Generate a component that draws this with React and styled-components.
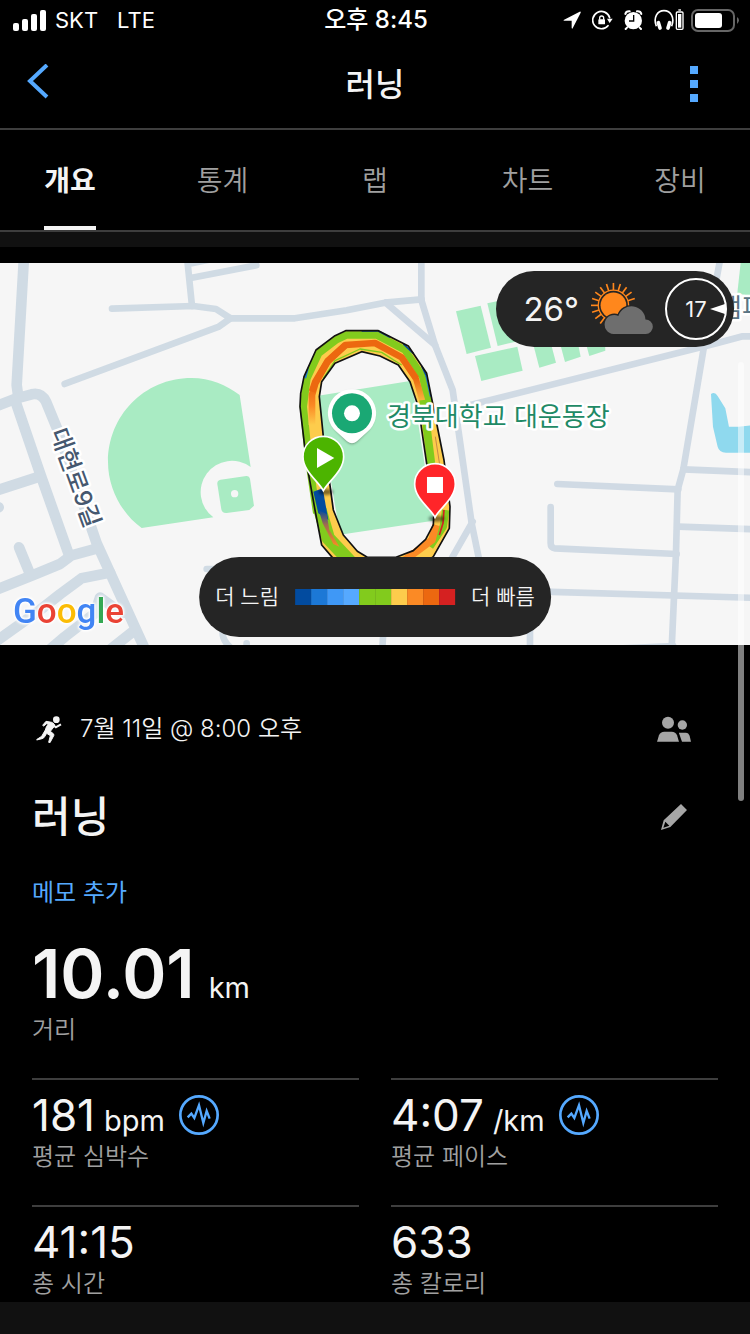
import { useState } from "react"
import styled, { createGlobalStyle } from "styled-components"

const GlobalStyle = createGlobalStyle`
  :root {
    --white: #f4f4f4;
    --grey: #a0a0a0;
    --line: #3e3e3e;
    --strip: #111;
    --blue: #55a9ff;
    --pill: #252525;
  }

  * {
    box-sizing: border-box;
  }

  body {
    margin: 0;
    background-color: #000;
    color: var(--white);
    font-family: Inter, "Noto Sans CJK KR", sans-serif;
  }

  h1, h2, p, dl, dt, dd {
    margin: 0;
  }

  button {
    padding: 0;
    border: none;
    background: none;
    color: inherit;
    font: inherit;
    cursor: pointer;
  }

  svg {
    display: block;
  }
`

const Screen = styled.div`
  position: relative;
  display: flex;
  flex-direction: column;
  min-height: 100vh;
`

const StatusBar = styled.div`
  display: grid;
  grid-template-columns: 1fr auto 1fr;
  align-items: center;
  height: 40px;
  padding: 0 11px 0 13px;
  color: #fff;
  font-size: 22px;
  line-height: 40px;
`

const StatusGroup = styled.div`
  display: flex;
  align-items: center;
  justify-content: ${({ $end }) => ($end ? "flex-end" : "flex-start")};
  gap: ${({ $gap }) => $gap}px;
`

const StatusTime = styled.time`
  font-size: 24px;
  font-weight: 500;
`

const Header = styled.header`
  display: grid;
  grid-template-columns: 1fr auto 1fr;
  align-items: center;
  height: 90px;
  padding: 0 27px;
  border-bottom: 2px solid var(--line);

  h1 {
    padding-top: 2px;
    font-size: 32px;
    line-height: 40px;
    font-weight: 500;
  }

  button {
    color: var(--blue);
    justify-self: start;
  }

  button:last-child {
    justify-self: end;
    padding: 0 25px;
  }
`

const TabList = styled.nav`
  display: grid;
  grid-template-columns: repeat(5, 100px);
  justify-content: space-between;
  height: 102px;
  padding: 0 20px;
  border-bottom: 2px solid var(--line);
`

const Tab = styled.button`
  display: flex;
  justify-content: center;

  span {
    padding-top: 6px;
    border-bottom: 4px solid
      ${({ $active }) => ($active ? "var(--white)" : "transparent")};
    color: ${({ $active }) => ($active ? "var(--white)" : "var(--grey)")};
    font-size: 28px;
    line-height: 90px;
    font-weight: ${({ $active }) => ($active ? 700 : 350)};
  }
`

const Strip = styled.div`
  flex: ${({ $grow }) => ($grow ? 1 : "none")};
  min-height: 15px;
  background-color: var(--strip);
`

const MapSection = styled.section`
  position: relative;
  height: 382px;
  margin-top: 16px;
  overflow: hidden;
  background-color: #f6f6f6;
`

const Pill = styled.div`
  position: absolute;
  display: flex;
  align-items: center;
  border-radius: 40px;
  background-color: var(--pill);
`

const WeatherPill = styled(Pill)`
  top: 8px;
  right: 16px;
  height: 76px;
  padding: 0 7px 0 27px;
  gap: 12px;
  font-size: 33px;
`

const LegendPill = styled(Pill)`
  bottom: 8px;
  left: 50%;
  height: 80px;
  padding: 0 16px;
  gap: 16px;
  transform: translateX(-50%);
  font-size: 21px;
  line-height: 32px;
  font-weight: 350;
  white-space: nowrap;
`

const LegendScale = styled.div`
  display: flex;
`

const LegendStep = styled.i`
  width: 16px;
  height: 16px;
  background-color: ${({ $color }) => $color};
`

const WindDial = styled.div`
  position: relative;
  display: grid;
  place-items: center;
  width: 62px;
  height: 62px;
  border: 2px solid #fff;
  border-radius: 50%;
  font-size: 22px;

  svg {
    position: absolute;
    right: 0;
  }
`

const GoogleLogo = styled.div`
  position: absolute;
  left: 13px;
  bottom: 11px;
  font-family: Roboto, sans-serif;
  font-size: 35px;
  line-height: 44px;
  font-weight: 500;
  filter: drop-shadow(0 0 1px #fff) drop-shadow(0 0 1px #fff)
    drop-shadow(0 0 1px #fff);
`

const Letter = styled.span`
  color: ${({ $color }) => $color};
`

const Details = styled.main`
  padding: 64px 32px 2px;
`

const DetailRow = styled.div`
  display: flex;
  align-items: center;
  justify-content: space-between;
  height: ${({ $height }) => $height}px;
  margin-bottom: ${({ $after }) => $after}px;

  h2 {
    font-size: 42px;
    font-weight: 500;
    line-height: 56px;
  }
`

const DateText = styled.p`
  display: flex;
  align-items: center;
  gap: 18px;
  padding-left: 4px;
  font-size: 24px;
  line-height: 40px;
  font-weight: 350;
`

const IconButton = styled.button`
  display: grid;
  place-items: center;
  width: 88px;
  height: 40px;
  color: #a6a6a6;
`

const MemoButton = styled.button`
  color: var(--blue);
  font-size: 24px;
  line-height: 36px;
`

const Metric = styled.div`
  display: flex;
  flex-direction: column-reverse;

  dt {
    color: var(--grey);
    font-size: 24px;
    line-height: 32px;
    font-weight: 350;
  }

  dd {
    display: flex;
    align-items: baseline;
    height: 40px;
    margin-bottom: 6px;
    font-size: 44px;
    line-height: 40px;
  }
`

const Unit = styled.span`
  margin-left: 9px;
  font-size: 29px;
`

const MainMetric = styled(Metric)`
  margin: 27px 0 32px;

  dd {
    height: 72px;
    margin-bottom: 4px;
    font-size: 67px;
    line-height: 72px;
    font-weight: 600;
  }

  ${Unit} {
    margin-left: 14px;
    font-weight: 400;
  }
`

const MetricGrid = styled.dl`
  display: grid;
  grid-template-columns: 1fr 1fr;
  gap: 32px;
`

const GridMetric = styled(Metric)`
  padding-top: 15px;
  border-top: 2px solid var(--line);
`

const ChartButton = styled.button`
  align-self: center;
  margin-left: 14px;
  color: var(--blue);
`

const ScrollThumb = styled.div`
  position: absolute;
  top: 362px;
  right: 6px;
  width: 6px;
  height: 439px;
  border-radius: 3px;
  background-color: rgba(255, 255, 255, 0.5);
`

const tabs = ["개요", "통계", "랩", "차트", "장비"]

const paceColors = [
  "#024b9f",
  "#1c78d6",
  "#3f98f6",
  "#56a9ff",
  "#82cb1d",
  "#82cb1d",
  "#fdcc4c",
  "#fb8a25",
  "#ec6810",
  "#d52121"
]

const logoLetters = [
  ["G", "#4285f4"],
  ["o", "#ea4335"],
  ["o", "#fbbc05"],
  ["g", "#4285f4"],
  ["l", "#34a853"],
  ["e", "#ea4335"]
]

const metrics = [
  { label: "평균 심박수", value: "181", unit: "bpm", chart: true },
  { label: "평균 페이스", value: "4:07", unit: "/km", chart: true },
  { label: "총 시간", value: "41:15" },
  { label: "총 칼로리", value: "633" }
]

function SignalIcon() {
  return (
    <svg width="33" height="21" fill="#fff">
      <rect y="13" width="6" height="8" rx="2" />
      <rect x="9" y="9" width="6" height="12" rx="2" />
      <rect x="18" y="4" width="6" height="17" rx="2" />
      <rect x="27" width="6" height="21" rx="2" />
    </svg>
  )
}

function LocationIcon() {
  return (
    <svg width="18" height="18" viewBox="0 0 54 54">
      <path
        d="M2 27 50 2 Q54 1 53 5 L29 52 Q27 55 26 50 V29 H4 Q0 29 2 27Z"
        fill="#fff"
      />
    </svg>
  )
}

function RotationLockIcon() {
  return (
    <svg width="21" height="20" viewBox="0 0 63 60" fill="none" stroke="#fff">
      <path
        d="M53 23 A26 26 0 1 0 48 47"
        strokeWidth="5"
        strokeLinecap="round"
      />
      <path d="M45 26 H62 L53 39Z" fill="#fff" stroke="none" />
      <path d="M23 29 V24 a6 6 0 0 1 12 0 V29" strokeWidth="4" />
      <rect x="19" y="28" width="20" height="15" rx="2" fill="#fff" stroke="none" />
    </svg>
  )
}

function AlarmIcon() {
  return (
    <svg width="19" height="20" viewBox="0 0 57 60">
      <circle cx="28" cy="32" r="26" fill="#fff" />
      <path
        d="M4 12 Q6 3 17 4 M52 12 Q50 3 39 4 M9 53 5 57 M47 53 51 57"
        fill="none"
        stroke="#fff"
        strokeWidth="6"
        strokeLinecap="round"
      />
      <path d="M29 15 V33 H15" fill="none" stroke="#000" strokeWidth="4" />
    </svg>
  )
}

function HeadphonesIcon() {
  return (
    <svg width="30" height="22" viewBox="0 0 90 66" fill="none" stroke="#fff">
      <path d="M7 52 C-3 25 10 5 30 5 S63 25 53 52" strokeWidth="5" />
      <path
        d="M13 41 18 57 M47 41 42 57"
        strokeWidth="11"
        strokeLinecap="round"
      />
      <rect x="67" y="9" width="20" height="52" rx="3" strokeWidth="4" />
      <path d="M73 3 H81" strokeWidth="4" />
      <rect x="72" y="15" width="10" height="41" fill="#fff" stroke="none" />
    </svg>
  )
}

function BatteryIcon() {
  return (
    <svg width="48" height="23" viewBox="0 0 48 23">
      <rect
        x="1"
        y="1"
        width="42"
        height="21"
        rx="6"
        fill="none"
        stroke="#666"
        strokeWidth="2"
      />
      <rect x="4" y="4" width="27" height="15" rx="3" fill="#fff" />
      <path d="M46 8 Q50 11 46 15Z" fill="#666" />
    </svg>
  )
}

function BackIcon() {
  return (
    <svg width="22" height="40" viewBox="0 0 22 40">
      <path
        d="M20 1 3 17 20 33"
        fill="none"
        stroke="currentColor"
        strokeWidth="4"
      />
    </svg>
  )
}

function MoreIcon() {
  return (
    <svg width="8" height="36" fill="currentColor">
      <rect width="8" height="8" />
      <rect y="14" width="8" height="8" />
      <rect y="28" width="8" height="8" />
    </svg>
  )
}

function RunnerIcon() {
  return (
    <svg width="26" height="27" viewBox="107 75 78 81">
      <circle cx="168" cy="86" r="10" fill="#f4f4f4" />
      <path
        d="M137 91 L154 94 Q164 98 162 106 L150 121 L160 129 Q162 133 158 138 L149 155 L145 154 L150 134 L139 127 L133 137 Q131 141 125 143 L109 147 L110 145 L124 136 L135 117 Q137 107 144 99 L139 98 L130 105 L127 103Z"
        fill="#f4f4f4"
        stroke="#f4f4f4"
        strokeWidth="3"
        strokeLinejoin="round"
      />
      <path
        d="M159 101 L166 109 L182 100"
        fill="none"
        stroke="#f4f4f4"
        strokeWidth="6"
        strokeLinejoin="round"
      />
    </svg>
  )
}

function PeopleIcon() {
  return (
    <svg width="34" height="26" viewBox="0 0 102 78" fill="currentColor">
      <circle cx="33" cy="20" r="18" />
      <circle cx="76" cy="27" r="14" />
      <path d="M0 77 L6 58 Q10 47 22 47 H44 Q56 47 60 58 L66 77Z" />
      <path d="M66 50 H86 Q95 50 98 60 L102 77 H75 L66 52Z" />
    </svg>
  )
}

function PencilIcon() {
  return (
    <svg width="26" height="26" viewBox="0 0 78 78">
      <path
        d="M60 0 78 18 28 69 0 78 8 49Z M13 53 7 71 25 65Z"
        fill="currentColor"
        fillRule="evenodd"
      />
    </svg>
  )
}

function ChartIcon() {
  return (
    <svg width="40" height="40" viewBox="0 0 120 120" fill="none" stroke="currentColor">
      <circle cx="60" cy="60" r="56" strokeWidth="8" />
      <path
        d="M26 67 37 56 46 69 60 31 73 84 83 48 92 71"
        strokeWidth="7"
      />
    </svg>
  )
}

function WeatherIcon() {
  // rays fan around the part of the sun that the cloud leaves free
  const rays = Array.from({ length: 13 }, (_, i) => (i - 8) * 18)

  return (
    <svg width="62" height="54" viewBox="302 62 188 162">
      {rays.map((angle) => (
        <path
          key={angle}
          d="M370 64 V86"
          stroke="#ff871c"
          strokeWidth="5"
          transform={`rotate(${angle} 370 132)`}
        />
      ))}
      <circle cx="370" cy="132" r="46" fill="none" stroke="#ff871c" strokeWidth="4" />
      <circle cx="370" cy="132" r="39" fill="#ff871c" />
      <path
        d="M370 219 A29 29 0 1 1 385 164 A42 42 0 0 1 467 175 A22 22 0 1 1 468 219Z"
        fill="#6e6e6e"
        stroke="#252525"
        strokeWidth="8"
        paintOrder="stroke"
      />
    </svg>
  )
}

function RouteMap() {
  return (
    <svg
      width="100%"
      height="382"
      viewBox="0 263 750 382"
      preserveAspectRatio="xMidYMid slice"
      role="img"
      aria-label="경북대학교 대운동장"
    >
      <defs>
        <filter id="soft" x="-50%" y="-50%" width="200%" height="200%">
          <feGaussianBlur stdDeviation="5" />
        </filter>
        <linearGradient id="leftLane" x1="0" y1="230" x2="0" y2="345" gradientUnits="userSpaceOnUse">
          <stop stopColor="#ec6810" />
          <stop offset=".5" stopColor="#fb8a25" />
          <stop offset="1" stopColor="#fdcc4c" />
        </linearGradient>
        <linearGradient id="slowLane" x1="0" y1="600" x2="0" y2="710" gradientUnits="userSpaceOnUse">
          <stop stopColor="#024b9f" />
          <stop offset=".4" stopColor="#a06a50" />
          <stop offset="1" stopColor="#fb8a25" />
        </linearGradient>
        <linearGradient id="rightLane" x1="0" y1="205" x2="0" y2="290" gradientUnits="userSpaceOnUse">
          <stop stopColor="#ec6810" />
          <stop offset="1" stopColor="#fdcc4c" />
        </linearGradient>
      </defs>

      {/* west side */}
      <g transform="translate(0 260) scale(.3333)">
        <g
          fill="none"
          stroke="#d0dbe4"
          strokeWidth="32"
          strokeLinecap="round"
          strokeLinejoin="round"
        >
          <path d="M72 -10 50 375 55 412" />
          <path d="M-20 442 50 415 95 403 Q124 397 138 425 L175 515 290 850 445 1190" />
          <path d="M45 420 120 640 207 885" />
          <path d="M-20 695 118 650" />
          <path d="M-10 740 -4 742" />
          <path d="M-20 993 100 945 180 912 215 886 292 865" />
          <path d="M57 862 90 942" />
          <path d="M-20 1150 120 1050 180 1003 245 955 330 938" />
          <path d="M130 1185 195 1130 285 1060 300 1013 365 1060" />
          <path d="M310 1185 405 1110" />
        </g>
        <g
          fill="none"
          stroke="#d0dbe4"
          strokeWidth="20"
          strokeLinecap="round"
          strokeLinejoin="round"
        >
          <path d="M336 146 580 138 648 147 692 175 655 201 194 372" />
          <path d="M692 175 H885 L1040 151 1155 128 1265 118" />
          <path d="M561 -10 576 138 M572 54 769 16 M565 12 660 -8" />
          <path d="M620 927 H680 M668 1120 Q668 1145 700 1170 M740 1150 V1180 M1150 1120 1146 1180" />
        </g>
        <path
          d="M719 405 752 621 A92 92 0 0 0 640 772 L425 804 C370 765 324 690 324 605 C324 470 430 354 575 354 C630 354 680 375 719 405Z"
          fill="#a9ebc3"
        />
        <path
          d="M662 659 739 648 Q748 647 750 656 L762 737 748 750 680 759 Q666 760 664 748 L652 672 Q651 661 662 659Z"
          fill="#a9ebc3"
        />
        <circle cx="704" cy="701" r="11" fill="#f6f6f6" />
      </g>

      {/* east side */}
      <g transform="translate(450 260) scale(.3333)">
        <g
          fill="none"
          stroke="#d0dae4"
          strokeWidth="20"
          strokeLinecap="round"
          strokeLinejoin="round"
        >
          <path d="M-86 -10 -86 120 -45 255 8 390 65 790 100 960" />
          <path d="M-193 128 -45 255" />
          <path d="M68 785 5 895" />
          <path d="M10 448 800 250 878 229 H920" />
          <path d="M812 -10 762 260 700 628 683 690 678 880 664 1190" />
          <path d="M322 672 685 688" />
          <path d="M302 741 V850 Q302 864 315 865 L680 882" />
          <path d="M700 628 920 637 M685 800 920 808 M280 995 920 1014" />
          <path d="M240 1100 V1180 M500 1166 670 1158" />
        </g>
        <g fill="#a9ebc3">
          <path d="M18 154 92 137 123 263 50 282Z" />
          <path d="M112 130 190 113 220 240 143 258Z" />
          <path d="M75 288 202 260 218 332 94 363Z" />
          <path d="M252 262 300 240 318 308 268 323Z" />
          <path d="M330 250 382 240 392 290 345 306Z" />
          <path d="M405 240 465 240 466 272 418 288Z" />
          <path d="M873 0 H920 V112 L862 100Z" />
        </g>
        <path
          d="M783 402 Q795 394 803 408 L826 445 837 500 H866 L920 494 V578 H828 Q807 576 803 560 L789 500Z"
          fill="#8fd9ee"
        />
      </g>

      {/* stadium and the recorded laps */}
      <g transform="translate(280 310) scale(.3333)">
        <path d="M110 258 395 212 460 632 180 674Z" fill="#a9ebc3" />
        <path
          d="M197 62 H295 L385 108 440 190 462 300 492 450 510 590 508 655 460 740 380 800 H220 L155 740 125 705 105 600 80 460 60 290 62 250 72 200 108 120 165 77Z
             M245 125 L165 160 125 215 118 260 130 380 160 600 190 675 232 724 262 742 H348 L400 722 437 688 460 645 462 600 440 460 415 290 390 215 355 165 300 138Z"
          fill="#fdcc4c"
          fillRule="evenodd"
        />
        <g fill="none" strokeLinejoin="round">
          <path
            d="M110 610 87 455 70 290 81 205 116 130 170 89 200 75 H290 L375 120 428 200 450 300"
            stroke="#82cb1d"
            strokeWidth="22"
          />
          <path
            d="M96 345 V255 L106 220 143 155 196 106"
            stroke="url(#leftLane)"
            strokeWidth="20"
          />
          <path
            d="M96 245 106 215 143 153 196 105 285 99 365 142 408 205"
            stroke="#ec6810"
            strokeWidth="20"
          />
          <path d="M406 200 432 290" stroke="url(#rightLane)" strokeWidth="18" />
          <path
            d="M130 205 165 152 240 117 305 127 365 165"
            stroke="#82cb1d"
            strokeWidth="4"
          />
          <path d="M430 270 455 470" stroke="#82cb1d" strokeWidth="24" />
          <path d="M466 380 480 470" stroke="#c98a45" strokeWidth="3" />
          <path d="M497 600 490 650 450 710" stroke="#82cb1d" strokeWidth="22" />
          <path d="M468 645 456 690 375 750" stroke="#fb8a25" strokeWidth="22" />
          <path d="M492 600 489 640 478 675" stroke="#d52121" strokeWidth="5" />
          <path d="M120 600 145 685 215 760" stroke="#82cb1d" strokeWidth="40" />
          <path d="M245 63 H295 L330 82 M370 102 400 130 M425 168 440 200" stroke="#024b9f" strokeWidth="5" />
          <path d="M438 195 452 260 M76 205 84 175" stroke="#1c78d6" strokeWidth="5" />
        </g>
        <path d="M100 545 128 535 145 630 115 610Z" fill="#024b9f" />
        <path d="M116 600 140 612 148 660 178 710 160 702 128 640Z" fill="url(#slowLane)" />
        <g fill="none" stroke="#111" strokeWidth="5" strokeLinejoin="round">
          <path d="M220 800 155 740 125 705 105 600 80 460 60 290 62 250 72 200 108 120 165 77 197 62 H295 L385 108 440 190 462 300 492 450 510 590 508 655 460 740 380 800" />
          <path d="M245 125 165 160 125 215 118 260 130 380 160 600 190 675 232 724 262 742 H348 L400 722 437 688 460 645 462 600 440 460 415 290 390 215 355 165 300 138Z" />
        </g>
      </g>

      <g
        fontFamily="Inter, 'Noto Sans CJK KR', sans-serif"
        stroke="#fff"
        strokeWidth="5"
        strokeLinejoin="round"
        paintOrder="stroke"
      >
        <text x="387" y="426" fontSize="26" fill="#1f8a66">
          경북대학교 대운동장
        </text>
        <text x="718" y="317" fontSize="26" fill="#5a7584">
          캠퍼
        </text>
        <text
          fontSize="24"
          fontWeight="500"
          fill="#46586f"
          transform="translate(50 432) rotate(70)"
        >
          대현로9길
        </text>
      </g>

      <g transform="translate(280 310) scale(.3333)">
        <path
          d="M216 244 A70 70 0 0 1 262 362 L231 394 Q216 408 201 394 L170 362 A70 70 0 0 1 216 244Z"
          fill="#000"
          opacity=".5"
          filter="url(#soft)"
        />
        <path
          d="M216 238 A72 72 0 0 1 264 364 L231 394 Q216 406 201 394 L168 364 A72 72 0 0 1 216 238Z"
          fill="#fff"
        />
        <circle cx="216" cy="310" r="60" fill="#1aa874" />
        <circle cx="216" cy="310" r="24" fill="#fff" />

        <ellipse cx="138" cy="546" rx="22" ry="9" opacity=".5" filter="url(#soft)" />
        <path
          d="M130 542 C116 514 69 484 69 440 A61 61 0 0 1 191 440 C191 484 144 514 130 542Z"
          fill="#4cb400"
          stroke="#fff"
          strokeWidth="5"
        />
        <path d="M111 414 163 444 111 474Z" fill="#fff" />

        <ellipse cx="470" cy="626" rx="24" ry="9" opacity=".5" filter="url(#soft)" />
        <path
          d="M465 622 C451 594 404 566 404 522 A61 61 0 0 1 526 522 C526 566 479 594 465 622Z"
          fill="#ff2529"
          stroke="#fff"
          strokeWidth="5"
        />
        <rect x="441" y="501" width="48" height="48" fill="#fff" />
      </g>
    </svg>
  )
}

export default function App() {
  const [activeTab, setActiveTab] = useState(tabs[0])

  return (
    <Screen>
      <GlobalStyle />

      <StatusBar>
        <StatusGroup $gap={9}>
          <SignalIcon />
          <StatusGroup $gap={19}>
            <span>SKT</span>
            <span>LTE</span>
          </StatusGroup>
        </StatusGroup>
        <StatusTime>오후 8:45</StatusTime>
        <StatusGroup $gap={7} $end>
          <StatusGroup $gap={11}>
            <LocationIcon />
            <RotationLockIcon />
            <AlarmIcon />
            <HeadphonesIcon />
          </StatusGroup>
          <BatteryIcon />
        </StatusGroup>
      </StatusBar>

      <Header>
        <button aria-label="뒤로">
          <BackIcon />
        </button>
        <h1>러닝</h1>
        <button aria-label="더 보기">
          <MoreIcon />
        </button>
      </Header>

      <TabList>
        {tabs.map((tab) => (
          <Tab
            key={tab}
            $active={tab === activeTab}
            onClick={() => setActiveTab(tab)}
          >
            <span>{tab}</span>
          </Tab>
        ))}
      </TabList>
      <Strip />

      <MapSection>
        <RouteMap />

        <GoogleLogo>
          {logoLetters.map(([letter, color], i) => (
            <Letter key={i} $color={color}>
              {letter}
            </Letter>
          ))}
        </GoogleLogo>

        <WeatherPill>
          <span>26°</span>
          <WeatherIcon />
          <WindDial>
            17
            <svg width="15" height="10" viewBox="0 0 15 10">
              <path d="M0 5 15 0 V10Z" fill="#fff" />
            </svg>
          </WindDial>
        </WeatherPill>

        <LegendPill>
          <span>더 느림</span>
          <LegendScale>
            {paceColors.map((color, i) => (
              <LegendStep key={i} $color={color} />
            ))}
          </LegendScale>
          <span>더 빠름</span>
        </LegendPill>
      </MapSection>

      <Details>
        <DetailRow $height={40} $after={40}>
          <DateText>
            <RunnerIcon />
            <span>7월 11일 @ 8:00 오후</span>
          </DateText>
          <IconButton aria-label="공개 범위">
            <PeopleIcon />
          </IconButton>
        </DetailRow>

        <DetailRow $height={56} $after={30}>
          <h2>러닝</h2>
          <IconButton aria-label="이름 편집">
            <PencilIcon />
          </IconButton>
        </DetailRow>

        <DetailRow $height={36} $after={0}>
          <MemoButton>메모 추가</MemoButton>
        </DetailRow>

        <dl>
          <MainMetric>
            <dt>거리</dt>
            <dd>
              10.01<Unit>km</Unit>
            </dd>
          </MainMetric>
        </dl>

        <MetricGrid>
          {metrics.map(({ label, value, unit, chart }) => (
            <GridMetric key={label}>
              <dt>{label}</dt>
              <dd>
                {value}
                {unit && <Unit>{unit}</Unit>}
                {chart && (
                  <ChartButton aria-label={`${label} 차트`}>
                    <ChartIcon />
                  </ChartButton>
                )}
              </dd>
            </GridMetric>
          ))}
        </MetricGrid>
      </Details>
      <Strip $grow />

      <ScrollThumb />
    </Screen>
  )
}
